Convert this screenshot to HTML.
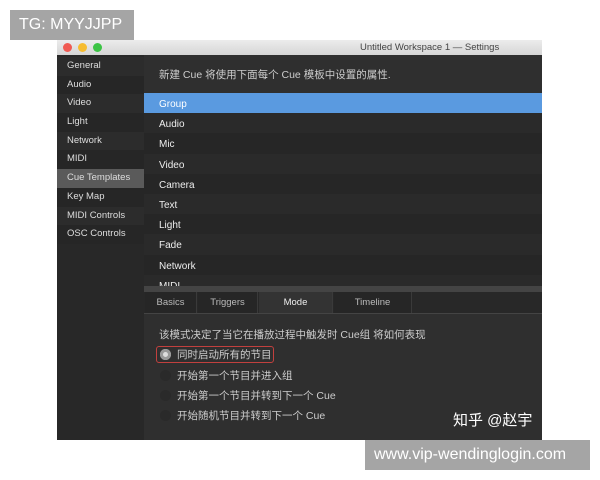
<!DOCTYPE html><html><head><meta charset="utf-8"><style>
*{margin:0;padding:0;box-sizing:border-box}
body{width:600px;height:480px;background:#fff;position:relative;overflow:hidden;font-family:"Liberation Sans","Noto Sans CJK SC",sans-serif}
.a{position:absolute}
.wm{background:#a5a5a5;color:#fff;font-size:16px;line-height:30px;padding-left:9px}
.side div{height:18.7px;line-height:18.7px;padding-left:10px;font-size:9.5px;color:#ddd}
.row{height:20.2px;line-height:21px;padding-top:1px;padding-left:15px;font-size:10px;color:#eee}
.tab{position:absolute;top:0;height:21px;line-height:21px;text-align:center;font-size:9.5px;color:#bbb;background:#262626;border-right:1px solid #3a3a3a}
.opt{position:absolute;left:160px;font-size:10.5px;color:#ccc;height:14px;line-height:14px}
.rad{display:inline-block;width:11px;height:11px;border-radius:50%;background:#2a2a2a;vertical-align:-2px;margin-right:6px}
</style></head><body>
<div class="a" style="left:57px;top:40px;width:485px;height:400px;background:#2f2f2f"></div>
<div class="a" style="left:57px;top:40px;width:485px;height:15px;background:linear-gradient(#ececec,#d6d6d6)"></div>
<div class="a" style="left:63px;top:43px;width:9px;height:9px;border-radius:50%;background:#f05a52"></div>
<div class="a" style="left:78px;top:43px;width:9px;height:9px;border-radius:50%;background:#f6bc30"></div>
<div class="a" style="left:93px;top:43px;width:9px;height:9px;border-radius:50%;background:#3cc445"></div>
<div class="a" style="left:360px;top:41px;font-size:9.5px;color:#444;line-height:13px">Untitled Workspace 1 — Settings</div>
<div class="a side" style="left:57px;top:55px;width:87px;height:385px;background:#282828;padding-top:2px">
<div style="background:#2c2c2c">General</div><div style="background:#262626">Audio</div><div style="background:#2c2c2c">Video</div><div style="background:#262626">Light</div><div style="background:#2c2c2c">Network</div><div style="background:#262626">MIDI</div><div style="background:#5a5a5a">Cue Templates</div><div style="background:#262626">Key Map</div><div style="background:#2c2c2c">MIDI Controls</div><div style="background:#262626">OSC Controls</div>
</div>
<div class="a" style="left:144px;top:55px;width:398px;height:385px;background:#2f2f2f"></div>
<div class="a" style="left:159px;top:67px;font-size:10.5px;color:#ccc">新建 Cue 将使用下面每个 Cue 模板中设置的属性.</div>
<div class="a" style="left:144px;top:93px;width:398px;height:195px;overflow:hidden;background:#282828">
<div class="row" style="background:#5a9ae0;color:#fff">Group</div><div class="row" style="background:#2a2a2a">Audio</div><div class="row" style="background:#262626">Mic</div><div class="row" style="background:#2a2a2a">Video</div><div class="row" style="background:#262626">Camera</div><div class="row" style="background:#2a2a2a">Text</div><div class="row" style="background:#262626">Light</div><div class="row" style="background:#2a2a2a">Fade</div><div class="row" style="background:#262626">Network</div><div class="row" style="background:#2a2a2a">MIDI</div>
</div>
<div class="a" style="left:144px;top:286px;width:398px;height:6px;background:#444"></div>
<div class="a" style="left:144px;top:292px;width:398px;height:22px;background:#282828;border-bottom:1px solid #444">
<div class="tab" style="left:1px;width:52px">Basics</div>
<div class="tab" style="left:54px;width:60px">Triggers</div>
<div class="tab" style="left:115px;width:74px;background:#333;color:#eee">Mode</div>
<div class="tab" style="left:190px;width:78px">Timeline</div>
</div>
<div class="a" style="left:159px;top:327px;font-size:10.5px;color:#ccc">该模式决定了当它在播放过程中触发时 Cue组 将如何表现</div>
<div class="a" style="left:156px;top:346px;width:118px;height:17px;border:1.5px solid #c2403e;border-radius:3px"></div>
<div class="opt" style="top:348px"><span class="rad" style="background:#ddd;box-shadow:inset 0 0 0 3px #999"></span>同时启动所有的节目</div>
<div class="opt" style="top:369px"><span class="rad"></span>开始第一个节目并进入组</div>
<div class="opt" style="top:389px"><span class="rad"></span>开始第一个节目并转到下一个 Cue</div>
<div class="opt" style="top:409px"><span class="rad"></span>开始随机节目并转到下一个 Cue</div>
<div class="a" style="left:453px;top:409px;font-size:15px;color:#fff">知乎 @赵宇</div>
<div class="a wm" style="left:10px;top:10px;width:124px;height:30px">TG: MYYJJPP</div>
<div class="a wm" style="left:365px;top:440px;width:225px;height:30px">www.vip-wendinglogin.com</div>
</body></html>
